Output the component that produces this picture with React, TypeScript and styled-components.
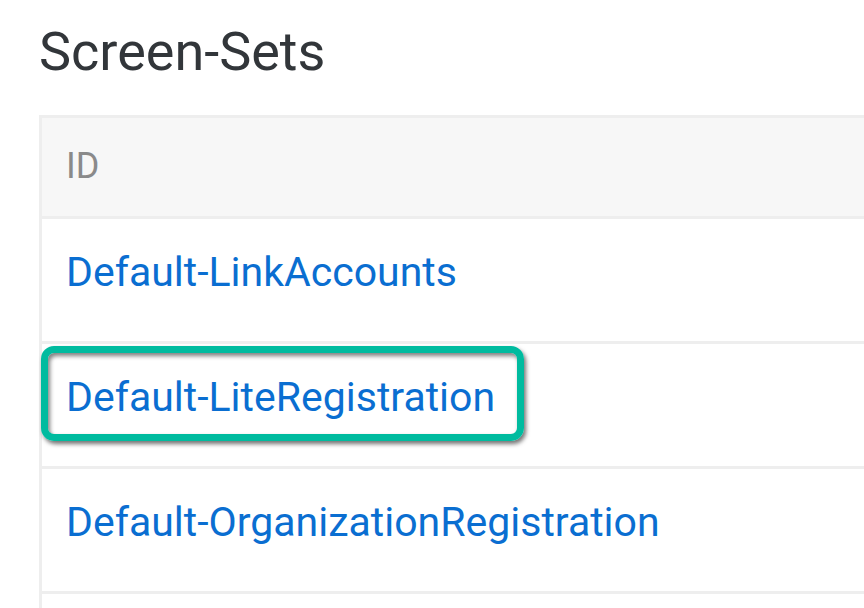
import styled, { createGlobalStyle } from 'styled-components';

const GlobalStyle = createGlobalStyle`
  html, body {
    margin: 0;
    padding: 0;
    background: #ffffff;
    overflow: hidden;
  }
  body {
    font-family: Roboto, "Noto Sans", Arial, sans-serif;
  }
`;

const Page = styled.div`
  width: 864px;
  height: 608px;
  overflow: hidden;
  padding-left: 39px;
  box-sizing: border-box;
`;

const Title = styled.h1`
  margin: 0;
  padding-top: 24px;
  height: 115px;
  box-sizing: border-box;
  font-size: 54px;
  font-weight: 400;
  line-height: 56px;
  color: #32363a;
`;

const Table = styled.div`
  width: 900px;
  border-left: 3px solid #eeeeee;
  border-top: 3px solid #eeeeee;
`;

const HeaderRow = styled.div`
  height: 101px;
  display: flex;
  align-items: center;
  padding-left: 24px;
  padding-bottom: 2px;
  box-sizing: border-box;
  background: #f7f7f7;
  border-bottom: 3px solid #eeeeee;
`;

const HeaderCell = styled.span`
  font-size: 36px;
  color: #8a8a8a;
`;

const Row = styled.div`
  height: 125px;
  display: flex;
  align-items: center;
  padding-bottom: 16px;
  box-sizing: border-box;
  border-bottom: 3px solid #eeeeee;
  background: #ffffff;
`;

const LinkBox = styled.div<{ highlighted?: boolean }>`
  display: flex;
  align-items: center;
  box-sizing: border-box;
  margin: ${({ highlighted }) => (highlighted ? '-7px 0 0 -1px' : '0')};
  height: ${({ highlighted }) => (highlighted ? '95px' : 'auto')};
  padding: ${({ highlighted }) => (highlighted ? '7px 22px 0 18px' : '0 0 0 24px')};
  border: ${({ highlighted }) => (highlighted ? '7px solid #00bb9f' : '0')};
  border-radius: 13px;
  box-shadow: ${({ highlighted }) =>
    highlighted
      ? '2px 3px 4px rgba(0, 0, 0, 0.55), inset 2px 3px 4px rgba(0, 0, 0, 0.5)'
      : 'none'};
`;

const IdLink = styled.a`
  font-size: 41px;
  color: #0a6ed1;
  text-decoration: none;
  cursor: pointer;
`;

const rows = [
  { id: 'Default-LinkAccounts' },
  { id: 'Default-LiteRegistration', highlighted: true },
  { id: 'Default-OrganizationRegistration' },
  { id: '' },
];

export default function App() {
  return (
    <>
      <GlobalStyle />
      <Page>
        <Title>Screen-Sets</Title>
        <Table>
          <HeaderRow>
            <HeaderCell>ID</HeaderCell>
          </HeaderRow>
          {rows.map((row, i) => (
            <Row key={i}>
              {row.id && (
                <LinkBox highlighted={row.highlighted}>
                  <IdLink>{row.id}</IdLink>
                </LinkBox>
              )}
            </Row>
          ))}
        </Table>
      </Page>
    </>
  );
}
